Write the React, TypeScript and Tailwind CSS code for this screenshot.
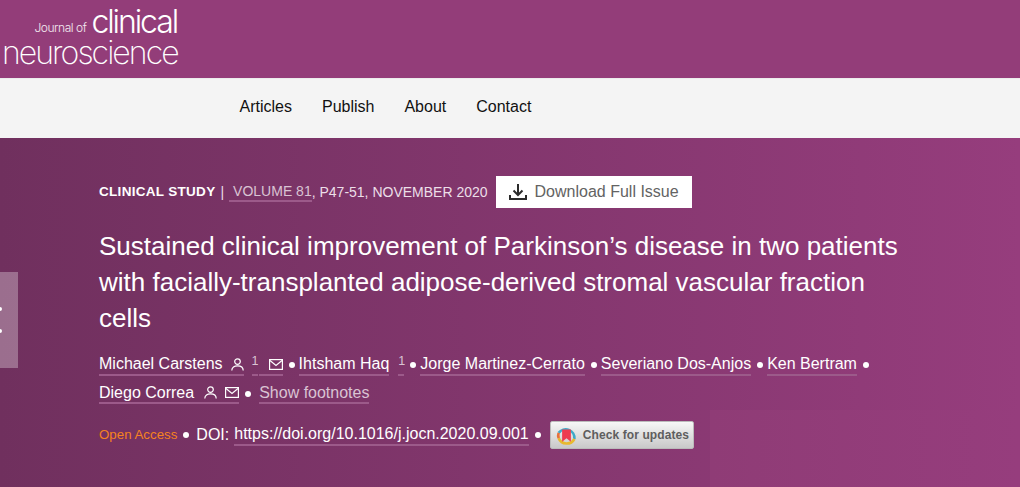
const font = { fontFamily: '"Liberation Sans", Arial, sans-serif' };

function PersonIcon() {
  return (
    <svg viewBox="0 0 13 13" className="h-[13px] w-[13px]" fill="none" stroke="currentColor" strokeWidth="1.2">
      <circle cx="6.5" cy="3.6" r="2.8" />
      <path d="M0.8 12.5 C0.8 9.2 3.4 7.8 6.5 7.8 S12.2 9.2 12.2 12.5" />
    </svg>
  );
}

function MailIcon() {
  return (
    <svg viewBox="0 0 14 11" className="h-[11px] w-[14px]" fill="none" stroke="currentColor" strokeWidth="1.2">
      <rect x="0.6" y="0.6" width="12.8" height="9.8" />
      <path d="M1 1.5 L7 6.5 L13 1.5" />
    </svg>
  );
}

function DownloadIcon() {
  return (
    <svg viewBox="0 0 18 16" className="h-[16px] w-[18px]" fill="none" stroke="#2b2b2b" strokeWidth="2">
      <path d="M9 0 V11" />
      <path d="M4.5 6.5 L9 11 L13.5 6.5" />
      <path d="M1 11 V15 H17 V11" />
    </svg>
  );
}

function Dot({ wide }: { wide?: boolean }) {
  return <span className={wide ? "ml-[6px] mr-[7px] h-[6px] w-[6px] rounded-full bg-white" : "ml-[6px] mr-[4px] h-[6px] w-[6px] rounded-full bg-white"} />;
}

function Link({ children, className = "" }: { children: React.ReactNode; className?: string }) {
  return <a className={"flex h-[21px] items-center border-b-2 border-[#9c5a8a] leading-[20px] " + className}>{children}</a>;
}

export default function App() {
  return (
    <div className="h-[487px] w-[1020px] overflow-hidden" style={font}>
      <header className="h-[78px] bg-[#933d79] text-white">
        <div className="h-full w-[190px] select-none pt-[2px]" style={{ fontFamily: "Inter, sans-serif" }}>
          <div className="flex h-[39px] items-end justify-end pr-[13px]">
            <span className="mb-[4px] mr-[5px] text-[12px] font-light tracking-[-0.45px] text-white/90">Journal of</span>
            <span className="text-[32px] font-light leading-[38px] tracking-[-2.1px]">clinical</span>
          </div>
          <div className="pl-[2px] text-[32px] font-extralight leading-[24px] tracking-[-1.95px]">neuroscience</div>
        </div>
      </header>

      <nav className="flex h-[60px] items-center gap-[30px] border-t border-[#ececec] bg-[#f4f4f4] pb-[4px] pl-[239.5px] text-[16px] text-[#111]">
        <a>Articles</a>
        <a>Publish</a>
        <a>About</a>
        <a>Contact</a>
      </nav>

      <main className="relative h-[349px] bg-gradient-to-r from-[#70305e] to-[#963d7d] pl-[99px] pt-[38px] text-white">
        <div className="absolute left-0 top-[134px] h-[96px] w-[18px] bg-white/30">
          <span className="absolute left-[-2px] top-[35px] h-[4px] w-[4px] rounded-full bg-white" />
          <span className="absolute left-[-2px] top-[57px] h-[4px] w-[4px] rounded-full bg-white" />
        </div>
        <div className="absolute bottom-0 left-[710px] right-0 top-[272px] bg-gradient-to-r from-[#8f3c76] to-[#963d7d]" />

        <div className="relative flex h-[32px] items-center text-[14px] text-[#ecdfe8]">
          <span className="text-[13.5px] font-bold tracking-[0.3px] text-white">CLINICAL STUDY</span>
          <span className="ml-[5px]">|</span>
          <a className="ml-[5px] border-b-2 border-[#9c5a8a] pl-[4px] leading-[18px] text-[#d9c3d3]">VOLUME 81</a>
          <span>, P47-51, NOVEMBER 2020</span>
          <a className="ml-[8px] flex h-[32px] w-[196px] items-center bg-white pl-[13px] text-[16px] text-[#636363]">
            <span className="mr-[8px]">
              <DownloadIcon />
            </span>
            Download Full Issue
          </a>
        </div>

        <h1 className="relative mt-[20px] w-[802px] text-[26px] leading-[36px] text-white">
          Sustained clinical improvement of Parkinson’s disease in two patients with facially-transplanted adipose-derived stromal vascular fraction cells
        </h1>

        <div className="relative mt-[15px] text-[16px]">
          <div className="flex h-[28px] items-center">
            <Link>
              Michael Carstens
              <span className="ml-[8px]">
                <PersonIcon />
              </span>
            </Link>
            <Link className="ml-[8px] w-[6px] !items-start text-[12.5px] !leading-[12px] text-[#d9c3d3]">1</Link>
            <Link className="ml-[1px] w-[24px] justify-end">
              <MailIcon />
            </Link>
            <Dot />
            <Link>Ihtsham Haq</Link>
            <Link className="ml-[9px] w-[6px] !items-start text-[12.5px] !leading-[12px] text-[#d9c3d3]">1</Link>
            <Dot />
            <Link>Jorge Martinez-Cerrato</Link>
            <Dot />
            <Link>Severiano Dos-Anjos</Link>
            <Dot />
            <Link>Ken Bertram</Link>
            <Dot />
          </div>
          <div className="flex h-[29px] items-center">
            <Link>
              Diego Correa
              <span className="ml-[10px]">
                <PersonIcon />
              </span>
              <span className="ml-[8px]">
                <MailIcon />
              </span>
            </Link>
            <Dot wide />
            <Link className="ml-[1px] text-[#d9c3d3]">Show footnotes</Link>
          </div>
        </div>

        <div className="relative mt-[13px] flex h-[28px] items-center text-[16px]">
          <span className="text-[13.3px] text-[#f58220]">Open Access</span>
          <Dot wide />
          <span>DOI:</span>
          <Link className="ml-[5px]">https://doi.org/10.1016/j.jocn.2020.09.001</Link>
          <Dot />
          <a className="ml-[5px] flex h-[28px] w-[144px] items-center rounded-[2px] border border-[#bbb] bg-gradient-to-b from-[#f7f7f7] to-[#c9c9c9] pl-[5px] text-[12px] font-bold tracking-[0.1px] text-[#5e5e5e]">
            <svg viewBox="0 0 24 24" className="mr-[6px] h-[21px] w-[21px] shrink-0" fill="none" strokeWidth="3">
              <path d="M3 9 A10 10 0 0 1 21 16" stroke="#3fa9c9" />
              <path d="M21 16 A10 10 0 0 1 3 15" stroke="#e8b92f" />
              <path d="M3 15 A10 10 0 0 1 3 9" stroke="#e8703a" />
              <path d="M7 5 H17 V19 L12 15 L7 19 Z" fill="#ee3c4f" stroke="none" />
            </svg>
            Check for updates
          </a>
        </div>
      </main>
    </div>
  );
}
